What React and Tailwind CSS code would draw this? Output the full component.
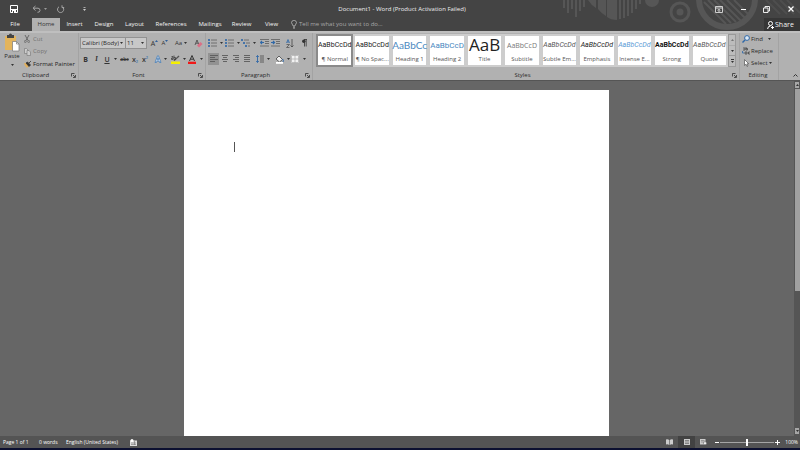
import React from 'react';

const Caret = ({ className = '' }) => (
  <svg className={`h-[2px] w-[3px] shrink-0 ${className}`} viewBox="0 0 3 2" fill="#333">
    <path d="M0 0h3L1.5 2z" />
  </svg>
);

const Icon = ({ w = 10, h = 10, children, className = '' }) => (
  <svg width={w} height={h} viewBox={`0 0 ${w} ${h}`} fill="none" className={`shrink-0 ${className}`}>
    {children}
  </svg>
);

const Tool = ({ label, className = '', children }) => (
  <button type="button" aria-label={label} className={`flex h-[12px] shrink-0 items-center justify-center ${className}`}>
    {children}
  </button>
);

const Launcher = ({ label }) => (
  <button type="button" aria-label={label} className="shrink-0">
    <Icon w={5} h={5}>
      <path d="M.5 3.5v-3h3M2 2l2 2M4.5 2v2.5H2" stroke="#333" strokeWidth=".8" />
    </Icon>
  </button>
);

function Group({ name, launcher, className = '', children }) {
  return (
    <section aria-label={name} className={`flex flex-col border-r border-[#a3a3a3] ${className}`}>
      <div className="h-[37px]">{children}</div>
      <div className="flex h-[10px] items-center pr-[2px] text-[#2a2a2a]">
        <span className="flex-1 text-center">{name}</span>
        {launcher && <Launcher label={`${name} settings`} />}
      </div>
    </section>
  );
}

function Decoration() {
  return (
    <svg className="absolute top-0 right-0 h-[31px] w-[260px]" viewBox="0 0 260 31" fill="none">
      <g stroke="#565656" strokeWidth="2">
        <path d="M24 0v8M28 0v13M32 0v9M36 0v17M40 0v11M44 0v7" />
        <path d="M80 0v19M84 0v18M88 0v16M92 0v13M96 0v9M100 0v4" />
      </g>
      <path d="M48 0h8v8q-5-3-8-8zM58 0h8v16q-5-3-8-7zM67 0h10v20q-6 0-10-3z" fill="#565656" />
      <circle cx="112" cy="0" r="7" fill="#565656" />
      <circle cx="140" cy="12" r="9" stroke="#565656" strokeWidth="3" />
      <circle cx="140" cy="12" r="3.5" fill="#565656" />
      <circle cx="187" cy="-1" r="28" stroke="#565656" strokeWidth="6" />
      <path d="M164 2l22 22M168 0l23 23M174 0l22 22M180 0l21 21M187 0l18 18M194 0l14 14" stroke="#565656" strokeWidth="2" />
      <path d="M226 0l14 14M233 0l14 14M240 0l14 14M247 0l13 13" stroke="#4e4e4e" strokeWidth="2" />
    </svg>
  );
}

function TitleBar() {
  return (
    <div className="relative flex h-[18px] items-center">
      <div className="flex flex-1 items-center pl-[10px] text-white">
        <Tool label="Save" className="w-[8px]">
          <Icon w={8} h={8}><path d="M.5.5h7v7h-7z" stroke="#fff" /><path d="M1 4h6v1H1zM2 5h4v2.500H2z" fill="#fff" /><path d="M3 6h1v2H3z" fill="#444" /></Icon>
        </Tool>
        <Tool label="Undo" className="ml-[14px] w-[9px]">
          <Icon w={9} h={8}><path d="M3.500 1L1 3.200 3.500 5.500M1.200 3.200H6Q8 3.200 8 5.500Q8 7.300 5.500 7.300" stroke="#a5a5a5" /></Icon>
        </Tool>
        <Tool label="Undo list" className="w-[9px]"><svg className="h-[2px] w-[3px]" viewBox="0 0 3 2"><path d="M0 0h3L1.500 2z" fill="#999" /></svg></Tool>
        <Tool label="Repeat" className="ml-[6px] w-[9px]">
          <Icon w={9} h={9}><path d="M3 1.800A3.100 3.100 0 1 0 6.500 2M6 .300V2.600H8.200" stroke="#a5a5a5" /></Icon>
        </Tool>
        <Tool label="Customize toolbar" className="ml-[15px] w-[9px]"><svg className="h-[4px] w-[3px]" viewBox="0 0 3 4" fill="#ccc"><path d="M.5 0h2v.700h-2zM0 2h3L1.500 4z" /></svg></Tool>
      </div>
      <h1 className="text-[#eee]">Document1 - Word (Product Activation Failed)</h1>
      <div className="flex flex-1 items-center justify-end pr-[6px]">
        <Tool label="Ribbon display options" className="w-[8px]">
          <Icon w={8} h={7}><path d="M.5.5h7v6h-7z M.5 2h7" stroke="#ddd" strokeWidth=".9" /><path d="M4 6V3.500M2.800 4.500L4 3.200l1.200 1.300" stroke="#ddd" strokeWidth=".9" /></Icon>
        </Tool>
        <Tool label="Minimize" className="ml-[17px] w-[6px]"><span className="h-px w-[5px] bg-white" /></Tool>
        <Tool label="Restore" className="ml-[17px] w-[7px]">
          <Icon w={7} h={7}><path d="M2 2V.5h4.500V5H5M.5 2h4.500v4.500H.5z" stroke="#fff" strokeWidth=".9" /></Icon>
        </Tool>
        <Tool label="Close" className="ml-[18px] w-[6px]">
          <Icon w={6} h={6}><path d="M.5.5l5 5M5.500.5l-5 5" stroke="#fff" strokeWidth="1.200" /></Icon>
        </Tool>
      </div>
    </div>
  );
}

const tabs = [
  ['File', 'w-[30px] mr-[2px]'],
  ['Home', 'w-[28px] bg-[#b1b1b1] text-[#333]'],
  ['Insert', 'w-[29px]'],
  ['Design', 'w-[30px]'],
  ['Layout', 'w-[31px]'],
  ['References', 'w-[42px]'],
  ['Mailings', 'w-[36px]'],
  ['Review', 'w-[27px]'],
  ['View', 'w-[33px]'],
];

function TabRow() {
  return (
    <div className="relative flex h-[13px] items-stretch text-[#f4f4f4]">
      <nav className="flex">
        {tabs.map(([name, cls]) => (
          <button key={name} type="button" className={`text-center ${cls}`}>{name}</button>
        ))}
      </nav>
      <label className="ml-[3px] flex flex-1 items-center gap-[2px]">
        <Icon w={6} h={9}><path d="M2 6Q2 5 1.200 4.200A2.400 2.400 0 1 1 4.800 4.200Q4 5 4 6zM2 7.200h2M2.300 8.300h1.400" stroke="#bbb" strokeWidth=".8" /></Icon>
        <input aria-label="Tell me what you want to do" placeholder="Tell me what you want to do..." className="w-[110px] bg-transparent placeholder:text-[#a8a8a8] outline-none" />
      </label>
      <button type="button" className="flex w-[36px] items-center gap-[1px] bg-[#363636] pl-[3px] text-[7px]">
        <Icon w={7} h={8}><circle cx="3.500" cy="2.500" r="2" stroke="#fff" /><path d="M.6 8Q.8 5 3.500 5M4 6.500h3M5.500 5v3" stroke="#fff" /></Icon>
        Share
      </button>
    </div>
  );
}

function ClipboardGroup() {
  return (
    <Group name="Clipboard" launcher className="w-[79px]">
      <div className="flex gap-[1px]">
        <button type="button" className="flex w-[23px] flex-col items-center pl-[1px] text-[#2a2a2a]">
          <Icon w={16} h={19}>
            <path d="M1 3h11v14H1z" fill="#e3b45c" />
            <path d="M3 2h2Q5 .5 6.500.5T8 2h2v3H3z" fill="#444" />
            <path d="M8.500 8.500h4l2.500 2.500v7H8.500z" fill="#fff" stroke="#777" strokeWidth=".7" />
            <path d="M12.500 8.500V11H15" stroke="#777" strokeWidth=".7" />
          </Icon>
          <span className="leading-[9px]">Paste</span>
          <Caret className="mt-[3px]" />
        </button>
        <div className="flex flex-col text-[#737373]">
          <button type="button" className="flex h-[12px] items-center gap-[3px]">
            <Icon w={6} h={8}><path d="M1 0l3 5.500M5 0L2 5.500" stroke="#6a6a6a" /><circle cx="1.300" cy="6.500" r="1" stroke="#6a6a6a" strokeWidth=".8" /><circle cx="4.700" cy="6.500" r="1" stroke="#6a6a6a" strokeWidth=".8" /></Icon>
            Cut
          </button>
          <button type="button" className="flex h-[13px] items-center gap-[2px]">
            <Icon w={7} h={8}><path d="M.5.5h2l1.500 1.500v3.500H.5z" fill="#ccc" stroke="#808080" strokeWidth=".7" /><path d="M3 2.500h2l1.500 1.500v3.500H3z" fill="#ccc" stroke="#808080" strokeWidth=".7" /></Icon>
            Copy
          </button>
          <button type="button" className="flex h-[12px] items-center gap-[2px] text-[#222]">
            <Icon w={7} h={7}><path d="M0 2l3 0 2 3-2 2L1 5z" fill="#e0b060" /><path d="M2 2l1.500-1 3 3L5 5.500zM5 2l2-2" fill="#333" stroke="#333" strokeWidth=".8" /></Icon>
            Format Painter
          </button>
        </div>
      </div>
    </Group>
  );
}

function Combo({ label, value, className }) {
  return (
    <div className={`flex h-[12px] items-center border border-[#929292] bg-[#c8c8c8] pr-[2px] ${className}`}>
      <input aria-label={label} defaultValue={value} className="w-0 min-w-0 flex-1 bg-transparent pl-px text-[#2a2a2a] outline-none" />
      <button type="button" aria-label={`${label} list`} className="flex h-full items-center pl-px"><Caret /></button>
    </div>
  );
}

function FontGroup() {
  return (
    <Group name="Font" launcher className="w-[127px]">
      <div className="flex flex-col gap-[4px] pt-[4px] pl-[1px] text-[#333]">
        <div className="flex h-[12px] items-center">
          <Combo label="Font" value="Calibri (Body)" className="w-[46px]" />
          <Combo label="Font size" value="11" className="-ml-px w-[22px]" />
          <Tool label="Grow font" className="ml-[2px] w-[11px] text-[7px]">A<svg className="mb-[4px] h-[2px] w-[3px]" viewBox="0 0 3 2"><path d="M0 2h3L1.500 0z" fill="#2f5f9a" /></svg></Tool>
          <Tool label="Shrink font" className="w-[10px]">A<svg className="mb-[4px] h-[2px] w-[3px]" viewBox="0 0 3 2"><path d="M0 0h3L1.500 2z" fill="#2f5f9a" /></svg></Tool>
          <Tool label="Change case" className="ml-[5px] w-[12px] gap-[2px] text-[6px]">Aa<Caret /></Tool>
          <Tool label="Clear formatting" className="ml-[7px] w-[9px]">
            <Icon w={9} h={9}><path d="M1 6l2-5 2 5M1.800 4.200h2.500" stroke="#444" strokeWidth=".8" /><path d="M3 6.500L6.500 3l2 2L5 8.500z" fill="#dc6f86" /></Icon>
          </Tool>
        </div>
        <div className="flex h-[12px] items-center text-[7px]">
          <Tool label="Bold" className="w-[11px]"><b>B</b></Tool>
          <Tool label="Italic" className="w-[11px]"><i className="font-serif font-bold">I</i></Tool>
          <Tool label="Underline" className="w-[10px]"><u className="font-semibold">U</u></Tool>
          <Tool label="Underline style" className="w-[7px]"><Caret /></Tool>
          <Tool label="Strikethrough" className="w-[11px] text-[5px] font-semibold"><s>abc</s></Tool>
          <Tool label="Subscript" className="w-[10px] font-semibold">x<span className="mt-[4px] text-[4px] text-[#2f6fb0]">2</span></Tool>
          <Tool label="Superscript" className="w-[10px] font-semibold">x<span className="mb-[4px] text-[4px] text-[#2f6fb0]">2</span></Tool>
          <Tool label="Text effects" className="ml-[4px] w-[13px] gap-[2px]">
            <Icon w={8} h={8}><path d="M1 7.500L3.500.8h1L7 7.500H5.500L5 6H3L2.500 7.500zM3.400 4.600h1.200L4 2.800z" fill="#c8d8e8" stroke="#4a7fb8" strokeWidth=".8" /></Icon>
            <Caret />
          </Tool>
          <Tool label="Highlight color" className="ml-[4px] w-[15px] gap-[3px]">
            <Icon w={9} h={9}><path d="M0 6.500h9V9H0z" fill="#f6f000" /><path d="M2.500 5.500L7.500.5l1 1-5 4.500z" fill="#555" /><path d="M.5 1.500h1.500v3H.5V3H2M3 .5v4h1.500v-2H3" stroke="#333" strokeWidth=".7" /></Icon>
            <Caret />
          </Tool>
          <Tool label="Font color" className="ml-[2px] w-[15px] gap-[4px]">
            <Icon w={8} h={9}><path d="M1.500 6L4 .5 6.500 6M2.400 4.200h3.200" stroke="#333" /><path d="M0 6.700h8V9H0z" fill="#f01818" /></Icon>
            <Caret />
          </Tool>
        </div>
      </div>
    </Group>
  );
}

const BulletIcon = ({ indent = false }) => (
  <Icon w={9} h={8}>
    <path d={indent ? 'M0 0h2v2H0zM2 3h2v2H2zM4 6h2v2H4z' : 'M0 0h2v2H0zM0 3h2v2H0zM0 6h2v2H0z'} fill="#4674a8" />
    <path d={indent ? 'M3 1h5M5 4h4M7 7h2' : 'M3 1h6M3 4h6M3 7h6'} stroke="#666" strokeWidth=".9" />
  </Icon>
);

const AlignIcon = ({ d }) => <Icon w={8} h={8}><path d={d} stroke="#5a5a5a" strokeWidth=".9" /></Icon>;

const IndentIcon = ({ arrow }) => (
  <Icon w={9} h={8}>
    <path d="M0 .5h9M5 2.500h4M5 4.500h4M0 7h9" stroke="#666" strokeWidth=".9" />
    <path d={arrow} stroke="#2f68a8" strokeWidth="1.200" />
  </Icon>
);

function ParagraphGroup() {
  return (
    <Group name="Paragraph" launcher className="w-[107px]">
      <div className="flex flex-col gap-[4px] pt-[4px] pl-[2px] text-[#333]">
        <div className="flex h-[12px] items-center">
          <Tool label="Bullets" className="w-[15px] gap-[3px]"><BulletIcon /><Caret /></Tool>
          <Tool label="Numbering" className="ml-[2px] w-[15px] gap-[3px]"><BulletIcon /><Caret /></Tool>
          <Tool label="Multilevel list" className="ml-[1px] w-[15px] gap-[3px]"><BulletIcon indent /><Caret /></Tool>
          <Tool label="Decrease indent" className="ml-[4px] w-[9px]"><IndentIcon arrow="M4 3.500H.5M2 2L.5 3.500 2 5" /></Tool>
          <Tool label="Increase indent" className="ml-[2px] w-[9px]"><IndentIcon arrow="M0 3.500h3.500M2 2l1.500 1.500L2 5" /></Tool>
          <Tool label="Sort" className="ml-[6px] w-[8px]">
            <Icon w={8} h={9}><path d="M.5 4L2 .5 3.500 4M1 3h2" stroke="#2f68a8" strokeWidth=".8" /><path d="M.5 5.500h3l-3 3h3" stroke="#555" strokeWidth=".8" /><path d="M6 0v8M4.500 6.500L6 8l1.500-1.500" stroke="#444" strokeWidth=".8" /></Icon>
          </Tool>
          <Tool label="Show marks" className="ml-[7px] w-[6px]">
            <Icon w={5} h={8}><path d="M2.500.5v7M4.200.5v7M2 .5h3" stroke="#333" strokeWidth=".8" /><circle cx="1.800" cy="2.200" r="1.700" fill="#333" /></Icon>
          </Tool>
        </div>
        <div className="flex h-[12px] items-center">
          <Tool label="Align left" className="w-[11px] bg-[#929292]"><AlignIcon d="M0 .5h8M0 2.500h5M0 4.500h8M0 6.500h5" /></Tool>
          <Tool label="Center" className="w-[11px]"><AlignIcon d="M1 .5h6M2 2.500h4M1 4.500h6M2 6.500h4" /></Tool>
          <Tool label="Align right" className="w-[11px]"><AlignIcon d="M1 .5h6M3 2.500h4M1 4.500h6M3 6.500h4" /></Tool>
          <Tool label="Justify" className="w-[11px]"><AlignIcon d="M1 .5h6M1 2.500h6M1 4.500h6M1 6.500h6" /></Tool>
          <Tool label="Line spacing" className="ml-[3px] w-[15px] gap-[3px]">
            <Icon w={8} h={8}><path d="M1.500.5v7M.2 2L1.500.5 2.800 2M.2 6l1.300 1.500L2.800 6" stroke="#2f68a8" strokeWidth=".9" /><path d="M4 1h4M4 3h4M4 5h4M4 7h4" stroke="#555" strokeWidth=".9" /></Icon>
            <Caret />
          </Tool>
          <Tool label="Shading" className="ml-[5px] w-[15px] gap-[3px]">
            <Icon w={9} h={9}><path d="M1 4l3-3 3.500 3.500L4.500 7z" fill="#eee" stroke="#444" strokeWidth=".8" /><path d="M7.500 4q1.500 1.500.5 3" stroke="#2f68a8" /><path d="M1 7h7v1.800H1z" fill="#fff" /></Icon>
            <Caret />
          </Tool>
          <Tool label="Borders" className="ml-[1px] w-[15px] gap-[4px]">
            <Icon w={8} h={8}><path d="M0 0h8v8H0z" fill="#f2f2f2" /><path d="M.5.5h7v7h-7zM4 0v8M0 4h8" stroke="#aaa" strokeWidth=".7" /></Icon>
            <Caret />
          </Tool>
        </div>
      </div>
    </Group>
  );
}

const body = "justify-center font-['Roboto',sans-serif] text-[7px]";
const styles = [
  ['AaBbCcDd', '¶ Normal', `${body} text-[#222]`],
  ['AaBbCcDd', '¶ No Spac...', `${body} text-[#222]`],
  ['AaBbCc', 'Heading 1', "justify-center text-[10px] font-['Lato',sans-serif] text-[#4a88c0]"],
  ['AaBbCcD', 'Heading 2', "justify-center text-[8px] font-['Roboto',sans-serif] text-[#4a88c0]"],
  ['AaB', 'Title', 'justify-center pb-[2px] text-[17px] text-[#222]'],
  ['AaBbCcD', 'Subtitle', 'justify-center text-[7px] text-[#777]'],
  ['AaBbCcDd', 'Subtle Em...', `${body} italic text-[#555]`],
  ['AaBbCcDd', 'Emphasis', `${body} italic text-[#222]`],
  ['AaBbCcDd', 'Intense E...', `${body} italic text-[#5b9bd5]`],
  ['AaBbCcDd', 'Strong', `${body} font-bold text-[#111]`],
  ['AaBbCcDd', 'Quote', `${body} italic text-[#555]`],
];

function StylesGroup() {
  return (
    <Group name="Styles" launcher className="min-w-0 flex-1">
      <div className="px-[3px] pt-[1px]">
        <div className="flex h-[33px] bg-[#cdcdcd]">
          <div className="grid min-w-0 flex-1 grid-cols-11">
            {styles.map(([preview, name, cls], i) => (
              <button
                key={name}
                type="button"
                className={`flex min-w-0 flex-col border-2 bg-white bg-clip-padding ${i === 0 ? 'border-[#8a8a8a]' : 'border-[#cdcdcd]'}`}
              >
                <span className={`flex h-[19px] w-full items-center whitespace-nowrap ${cls}`}>{preview}</span>
                <span className="h-[9px] w-full text-center whitespace-nowrap text-[#555] leading-[8px]">{name}</span>
              </button>
            ))}
          </div>
          <div className="flex w-[8px] flex-col border border-[#999] bg-[#bcbcbc]">
            <button type="button" aria-label="Previous styles" className="flex flex-1 items-center justify-center border-b border-[#999] opacity-50"><Caret className="rotate-180" /></button>
            <button type="button" aria-label="Next styles" className="flex flex-1 items-center justify-center border-b border-[#999]"><Caret /></button>
            <button type="button" aria-label="More styles" className="flex flex-1 flex-col items-center justify-center gap-px"><span className="h-px w-[3px] bg-[#333]" /><Caret /></button>
          </div>
        </div>
      </div>
    </Group>
  );
}

function EditingGroup() {
  return (
    <Group name="Editing" className="w-[39px]">
      <div className="flex flex-col pl-[2px] text-[#2a2a2a]">
        <button type="button" className="flex h-[12px] items-center gap-[1px]">
          <Icon w={8} h={8}><circle cx="5" cy="3" r="2.400" fill="#dce9f5" stroke="#2f68a8" /><path d="M3 5L.5 7.500" stroke="#2f68a8" strokeWidth="1.400" /></Icon>
          Find<Caret className="ml-[4px]" />
        </button>
        <button type="button" className="flex h-[12px] items-center gap-[1px]">
          <Icon w={8} h={8}><path d="M1 3h2V1H1M4 0v3h1.500V1.500H4" stroke="#444" strokeWidth=".8" /><path d="M3 7h2V5H3zM8 5H6.500v2H8" stroke="#444" strokeWidth=".8" /><path d="M.5 4v2H2" stroke="#2f68a8" strokeWidth=".8" /></Icon>
          Replace
        </button>
        <button type="button" className="flex h-[12px] items-center gap-[1px]">
          <Icon w={8} h={8}><path d="M2.500.5v6L4 5.200l1 2.300 1-.5-1-2.200h1.800z" fill="#fff" stroke="#555" strokeWidth=".7" /></Icon>
          Select<Caret />
        </button>
      </div>
    </Group>
  );
}

function Ribbon() {
  return (
    <div className="flex h-[49px] border-t-2 border-[#bfbfbf] bg-[#b1b1b1]">
      <ClipboardGroup />
      <FontGroup />
      <ParagraphGroup />
      <StylesGroup />
      <EditingGroup />
      <div className="flex w-[21px] items-end justify-end pr-[2px] pb-[3px]">
        <button type="button" aria-label="Collapse ribbon"><Icon w={5} h={3}><path d="M.5 2.500l2-2 2 2" stroke="#333" /></Icon></button>
      </div>
    </div>
  );
}

function ScrollBar() {
  return (
    <div className="flex w-[6px] flex-col bg-[#555]">
      <button type="button" aria-label="Scroll up" className="flex h-[8px] items-center justify-center border border-[#555] bg-[#a6a6a6]"><Caret className="rotate-180" /></button>
      <div className="h-[57%] border-l border-[#555] bg-[#a0a0a0]" />
      <div className="flex-1" />
      <button type="button" aria-label="Scroll down" className="mb-px flex h-[8px] items-center justify-center border border-[#555] bg-[#a6a6a6]"><Caret /></button>
    </div>
  );
}

function StatusBar() {
  return (
    <footer className="flex h-[12px] items-center bg-[#545454] pl-[3px] text-[5px] text-white">
      <span className="w-[36px]">Page 1 of 1</span>
      <span className="w-[27px]">0 words</span>
      <span className="w-[63px]">English (United States)</span>
      <Tool label="Record macro" className="w-[8px]">
        <Icon w={7} h={7}><path d="M0 1.500h7V7H0z" fill="#ddd" /><circle cx="2" cy="1.500" r="1.500" fill="#fff" /><path d="M1 4h5M1 5.500h5M4.500 2v4" stroke="#777" strokeWidth=".6" /></Icon>
      </Tool>
      <div className="flex flex-1 items-center justify-end pr-[2px]">
        <Tool label="Read mode" className="w-[18px]">
          <Icon w={7} h={6}><path d="M0 .5q2-.500 3.200.500v5q-1.200-1-3.200-.5zM7 .5q-2-.500-3.200.500v5q1.200-1 3.200-.5z" fill="#ccc" /></Icon>
        </Tool>
        <Tool label="Print layout" className="w-[17px] bg-[#424242]">
          <Icon w={6} h={6}><path d="M0 0h6v6H0z" fill="#ccc" /><path d="M1 1.500h4M1 3h4M1 4.500h4" stroke="#666" strokeWidth=".7" /></Icon>
        </Tool>
        <Tool label="Web layout" className="w-[17px]">
          <Icon w={7} h={6}><path d="M0 0h5.500v5.500H0z" fill="#ccc" /><path d="M1 1.500h3.500M1 3h3" stroke="#777" strokeWidth=".6" /><circle cx="5" cy="4.200" r="1.600" fill="#eee" stroke="#555" strokeWidth=".5" /></Icon>
        </Tool>
        <Tool label="Zoom out" className="ml-[1px] w-[7px]"><span className="h-px w-[4px] bg-white" /></Tool>
        <input
          type="range"
          aria-label="Zoom"
          min="0"
          max="100"
          defaultValue="50"
          className="h-[8px] w-[54px] appearance-none bg-transparent [&::-webkit-slider-runnable-track]:h-px [&::-webkit-slider-runnable-track]:bg-[#a5a5a5] [&::-webkit-slider-thumb]:-mt-[3px] [&::-webkit-slider-thumb]:h-[7px] [&::-webkit-slider-thumb]:w-[2px] [&::-webkit-slider-thumb]:appearance-none [&::-webkit-slider-thumb]:bg-white"
        />
        <Tool label="Zoom in" className="w-[7px]"><Icon w={5} h={5}><path d="M0 2.500h5M2.500 0v5" stroke="#fff" /></Icon></Tool>
        <span className="w-[17px] text-right">100%</span>
      </div>
    </footer>
  );
}

export default function App() {
  return (
    <div className="flex h-screen flex-col overflow-hidden bg-[#666] font-['Open_Sans','Noto_Sans',sans-serif] text-[6px] leading-[9px]">
      <header className="relative bg-[#444]">
        <Decoration />
        <TitleBar />
        <TabRow />
      </header>
      <Ribbon />
      <main className="flex min-h-0 flex-1 border-t border-[#555]">
        <div className="flex flex-1 justify-center overflow-hidden pt-[9px] pr-px">
          <div role="textbox" aria-label="Document" className="w-[425px] bg-white pt-[52px] pl-[50px]">
            <div className="h-[10px] w-px bg-[#555]" />
          </div>
        </div>
        <ScrollBar />
      </main>
      <StatusBar />
      <div className="h-[2px] bg-[#0c1030]" />
    </div>
  );
}
